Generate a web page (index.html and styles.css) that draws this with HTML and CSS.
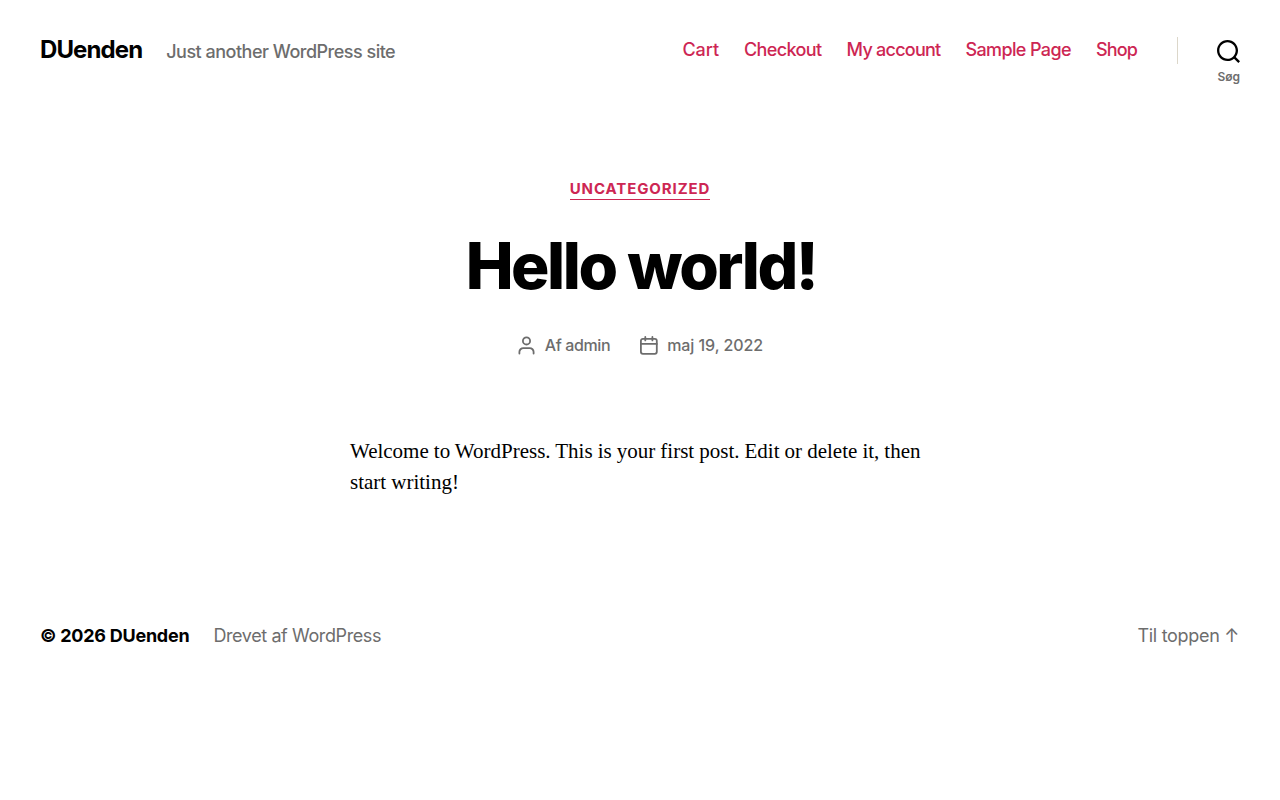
FILE: index.html
```html
<!DOCTYPE html>
<html lang="da">
<head>
    <meta charset="UTF-8">
    <title>Hello world! – DUenden</title>
    <link rel="stylesheet" href="styles.css">
</head>
<body>
    <header class="site-header">
        <div class="header-titles">
            <div class="site-title"><a href="#">DUenden</a></div>
            <div class="site-description">Just another WordPress site</div>
        </div>
        <div class="header-navigation">
            <nav>
                <ul class="primary-menu">
                    <li><a href="#">Cart</a></li>
                    <li><a href="#">Checkout</a></li>
                    <li><a href="#">My account</a></li>
                    <li><a href="#">Sample Page</a></li>
                    <li><a href="#">Shop</a></li>
                </ul>
            </nav>
            <div class="toggle-wrapper">
                <button class="search-toggle">
                    <svg width="23" height="23" viewBox="0 0 23 23"><path d="M38.710696,48.0601792 L43,52.3494831 L41.3494831,54 L37.0601792,49.710696 C35.2632422,51.1481185 32.9839107,52.0076499 30.5038249,52.0076499 C24.7027226,52.0076499 20,47.3049272 20,41.5038249 C20,35.7027226 24.7027226,31 30.5038249,31 C36.3049272,31 41.0076499,35.7027226 41.0076499,41.5038249 C41.0076499,43.9839107 40.1481185,46.2632422 38.710696,48.0601792 Z M36.3875844,47.1716785 C37.8030221,45.7026647 38.6734666,43.7048964 38.6734666,41.5038249 C38.6734666,36.9918565 35.0157934,33.3341833 30.5038249,33.3341833 C25.9918565,33.3341833 22.3341833,36.9918565 22.3341833,41.5038249 C22.3341833,46.0157934 25.9918565,49.6734666 30.5038249,49.6734666 C32.7048964,49.6734666 34.7026647,48.8030221 36.1716785,47.3875844 C36.2023931,47.347638 36.2360451,47.3092237 36.2726343,47.2726343 C36.3092237,47.2360451 36.347638,47.2023931 36.3875844,47.1716785 Z" transform="translate(-20 -31)"/></svg>
                    <span class="toggle-text">Søg</span>
                </button>
            </div>
        </div>
    </header>

    <main>
        <article class="post">
            <header class="entry-header">
                <div class="entry-categories"><a href="#">Uncategorized</a></div>
                <h1 class="entry-title">Hello world!</h1>
                <ul class="post-meta">
                    <li class="post-author">
                        <svg width="17" height="19" viewBox="0 0 17 19"><path d="M1.4 17.6v-1.6a3.9 3.9 0 0 1 3.9-3.9h6.4a3.9 3.9 0 0 1 3.9 3.9v1.6"/><circle cx="8.5" cy="4.9" r="3.6"/></svg>
                        <a href="#">Af admin</a>
                    </li>
                    <li class="post-date">
                        <svg width="18" height="19" viewBox="0 0 18 19"><rect x="0.9" y="2.8" width="15.9" height="15" rx="2"/><path d="M1 7.9h15.8M5.3 1v3.4M12.4 1v3.4"/></svg>
                        <a href="#">maj 19, 2022</a>
                    </li>
                </ul>
            </header>
            <div class="entry-content">
                <p>Welcome to WordPress. This is your first post. Edit or delete it, then start writing!</p>
            </div>
        </article>
    </main>

    <footer class="site-footer">
        <div class="footer-credits">
            <p class="footer-copyright">© 2026 <a href="#">DUenden</a></p>
            <p class="powered-by"><a href="#">Drevet af WordPress</a></p>
        </div>
        <a class="to-the-top" href="#">Til toppen <span class="arrow">↑</span></a>
    </footer>
</body>
</html>
```
FILE: styles.css
```css
* {
    box-sizing: border-box;
}
body {
    margin: 0;
    background: #fff;
    color: #000;
    font-family: Inter, sans-serif;
    font-size: 18px;
    letter-spacing: -0.4px;
}
a {
    color: inherit;
    text-decoration: none;
}
ul, p, h1 {
    margin: 0;
    padding: 0;
    list-style: none;
}
.site-header {
    display: flex;
    justify-content: space-between;
    align-items: center;
    height: 100px;
    padding: 0 40px;
}
.header-titles {
    display: flex;
    align-items: baseline;
    gap: 24px;
}
.site-title {
    font-size: 24px;
    font-weight: 700;
    line-height: 24px;
    letter-spacing: -0.9px;
}
.site-description {
    color: #6d6d6d;
    font-weight: 500;
    line-height: 18px;
    letter-spacing: -0.5px;
}
.header-navigation {
    display: flex;
    align-items: center;
}
.primary-menu {
    display: flex;
    gap: 25px;
    color: #cd2653;
    font-weight: 500;
    line-height: 22px;
    letter-spacing: -0.62px;
}
.primary-menu li:first-child {
    letter-spacing: -0.1px;
}
.primary-menu li:nth-child(2) {
    letter-spacing: -0.6px;
}
.primary-menu li:nth-child(3) {
    letter-spacing: -0.75px;
}
.primary-menu li:last-child {
    letter-spacing: -0.85px;
}
.toggle-wrapper {
    margin-left: 40px;
    padding-left: 39px;
    height: 27px;
    border-left: 1px solid #dcd7ca;
}
.search-toggle {
    display: block;
    position: relative;
    width: 23px;
    height: 27px;
    padding: 0;
    border: 0;
    background: none;
    font-family: inherit;
}
.search-toggle svg {
    display: block;
    margin-top: 3px;
}
.toggle-text {
    position: absolute;
    top: 32px;
    right: 0;
    color: #6d6d6d;
    font-size: 12px;
    font-weight: 600;
    line-height: 15px;
}
.entry-header {
    padding-top: 80px;
    text-align: center;
}
.entry-categories {
    height: 20px;
    font-size: 15px;
    font-weight: 700;
    line-height: 17px;
    letter-spacing: 0.9px;
    text-transform: uppercase;
}
.entry-categories a {
    display: inline-block;
    padding-bottom: 2px;
    color: #cd2653;
    border-bottom: 1px solid #cd2653;
}
.entry-title {
    margin-top: 29px;
    padding-left: 2px;
    font-size: 64px;
    font-weight: 800;
    line-height: 74px;
    letter-spacing: -2.45px;
}
.post-meta {
    display: flex;
    justify-content: center;
    gap: 30px;
    margin-top: 30px;
    padding-left: 1px;
    color: #6d6d6d;
    font-size: 16px;
    font-weight: 500;
    line-height: 24px;
}
.post-meta li {
    display: flex;
    align-items: center;
    gap: 10px;
}
.post-date {
    letter-spacing: -0.06px;
}
.post-meta svg {
    fill: none;
    stroke: #6d6d6d;
    stroke-width: 1.8;
    stroke-linecap: round;
}
.post-meta .post-date {
    gap: 9px;
}
.entry-content {
    width: 580px;
    margin: 79px auto 0;
    font-family: "Liberation Serif", serif;
    font-size: 21px;
    line-height: 31px;
    letter-spacing: 0;
    word-spacing: -0.18px;
}
.site-footer {
    display: flex;
    justify-content: space-between;
    margin-top: 124px;
    padding: 0 40px;
    line-height: 27px;
}
.footer-credits {
    display: flex;
    gap: 24px;
}
.footer-copyright {
    font-weight: 700;
    letter-spacing: -0.25px;
}
.powered-by, .to-the-top {
    color: #6d6d6d;
}
.to-the-top {
    padding-right: 1px;
    letter-spacing: -0.3px;
}
```
